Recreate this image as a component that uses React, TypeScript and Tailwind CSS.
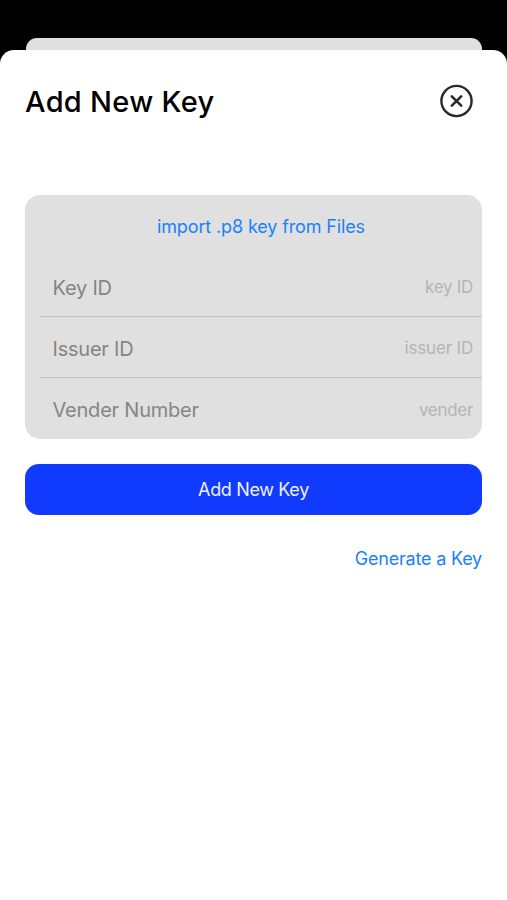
import React from 'react';

const fields = [
  { id: 'key', label: 'Key ID', placeholder: 'key ID', inputSpacing: 'tracking-[-0.3px]' },
  { id: 'issuer', label: 'Issuer ID', placeholder: 'issuer ID', inputSpacing: 'tracking-[-0.18px]' },
  { id: 'vender', label: 'Vender Number', placeholder: 'vender', inputSpacing: 'tracking-[-0.3px]' },
];

const CloseIcon = () => (
  <svg width="34" height="34" viewBox="0 0 34 34" fill="none" stroke="#29292b" strokeLinecap="round">
    <circle cx="17.5" cy="17" r="15.1" strokeWidth="2.4" />
    <path d="M12.8 12.4 22.2 21.6M22.2 12.4 12.8 21.6" strokeWidth="2.6" />
  </svg>
);

const App = () => {
  return (
    <div className="flex h-[900px] w-[507px] flex-col overflow-hidden bg-black pt-[38px] font-['Inter',sans-serif]">
      <div className="mx-[25.5px] h-[12px] shrink-0 rounded-t-[11px] bg-[#e0e0e0]" />

      <main className="flex-1 rounded-t-[14px] bg-white px-[25px]">
        <header className="flex items-center justify-between pt-[34px] pr-[9px]">
          <h1 className="pt-[2px] text-[29px] leading-[32px] font-medium tracking-[0.3px] text-black">Add New Key</h1>
          <button type="button" aria-label="Close">
            <CloseIcon />
          </button>
        </header>

        <section className="mt-[77px] h-[244px] overflow-hidden rounded-[15px] bg-[#e0e0e0]">
          <button
            type="button"
            className="h-[61px] w-full pt-[2px] pl-[15px] text-center text-[18px] tracking-[-0.13px] text-[#1a82fb]"
          >
            import .p8 key from Files
          </button>
          <div className="ml-[15px] divide-y divide-[#c4c4c6]">
            {fields.map((field) => (
              <div key={field.id} className="flex h-[61px] items-center justify-between pt-[3px] pr-[9px] pl-[12.5px]">
                <label htmlFor={field.id} className="text-[20px] tracking-[-0.22px] whitespace-nowrap text-[#858585]">
                  {field.label}
                </label>
                <input
                  id={field.id}
                  placeholder={field.placeholder}
                  className={`w-[180px] bg-transparent pt-px text-right text-[17px] outline-none placeholder:text-[#b4b4b6] ${field.inputSpacing}`}
                />
              </div>
            ))}
          </div>
        </section>

        <button
          type="button"
          className="mt-[25px] h-[51px] w-full rounded-[14px] bg-[#103bff] text-[18px] tracking-[-0.35px] text-[#eef1ff]"
        >
          Add New Key
        </button>

        <div className="mt-[30px] flex justify-end">
          <a href="#" className="text-[18px] leading-7 tracking-[-0.2px] text-[#1a82fb]">
            Generate a Key
          </a>
        </div>
      </main>
    </div>
  );
};

export default App;
